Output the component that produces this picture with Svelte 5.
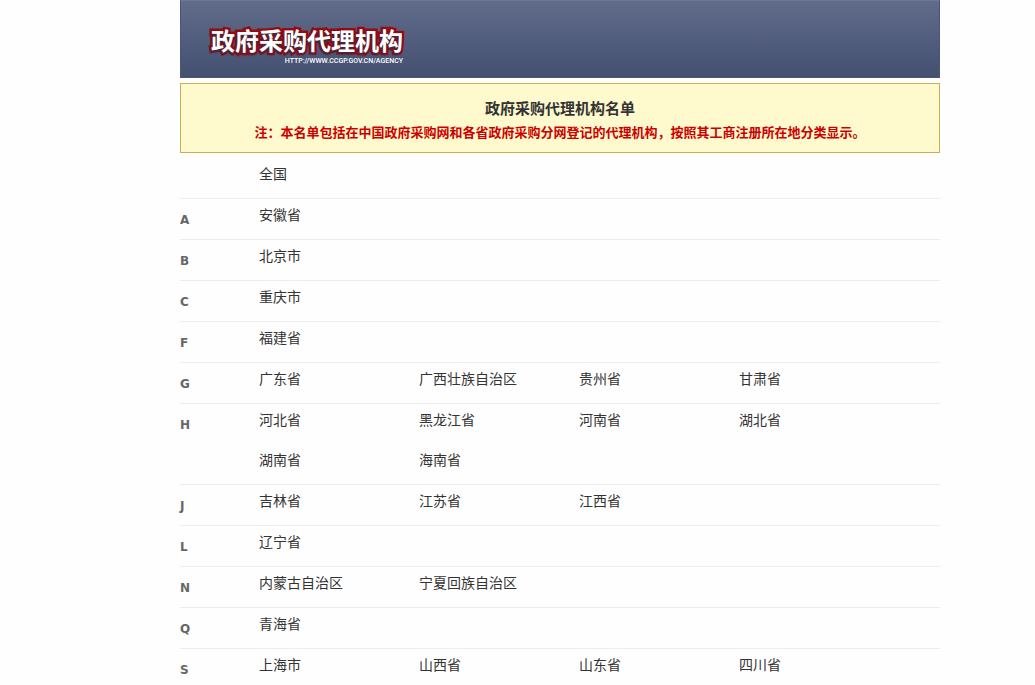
<script>
	const groups = [
		{ letter: '', regions: ['全国'] },
		{ letter: 'A', regions: ['安徽省'] },
		{ letter: 'B', regions: ['北京市'] },
		{ letter: 'C', regions: ['重庆市'] },
		{ letter: 'F', regions: ['福建省'] },
		{ letter: 'G', regions: ['广东省', '广西壮族自治区', '贵州省', '甘肃省'] },
		{ letter: 'H', regions: ['河北省', '黑龙江省', '河南省', '湖北省', '湖南省', '海南省'] },
		{ letter: 'J', regions: ['吉林省', '江苏省', '江西省'] },
		{ letter: 'L', regions: ['辽宁省'] },
		{ letter: 'N', regions: ['内蒙古自治区', '宁夏回族自治区'] },
		{ letter: 'Q', regions: ['青海省'] },
		{ letter: 'S', regions: ['上海市', '山西省', '山东省', '四川省'] }
	];
</script>

<div class="page">
	<header class="banner">
		<div class="logo">
			<div class="logo-name">政府采购代理机构</div>
			<div class="logo-url">HTTP://WWW.CCGP.GOV.CN/AGENCY</div>
		</div>
	</header>

	<section class="notice">
		<h1>政府采购代理机构名单</h1>
		<p>注：本名单包括在中国政府采购网和各省政府采购分网登记的代理机构，按照其工商注册所在地分类显示。</p>
	</section>

	<main>
		{#each groups as group}
			<div class="group">
				<div class="letter">{group.letter}</div>
				<ul>
					{#each group.regions as region}
						<li><a href="#{region}">{region}</a></li>
					{/each}
				</ul>
			</div>
		{/each}
	</main>
</div>

<style>
	:global(body) {
		background: #fefefe;
		overflow-x: hidden;
	}

	.page {
		max-width: 760px;
		margin-left: 180px;
		color: #333;
		font-family: 'Noto Sans CJK SC', sans-serif;
		font-size: 14px;
	}

	.banner {
		box-sizing: border-box;
		height: 78px;
		padding: 24px 30px 0;
		border: 1px solid #4a5676;
		border-top-color: #6c7794;
		background: linear-gradient(#616c8b, #445070);
	}

	.logo {
		width: max-content;
	}

	.logo-name {
		color: #fff;
		font-size: 24px;
		font-weight: 700;
		line-height: 30px;
		-webkit-text-stroke: 5px #960a10;
		paint-order: stroke fill;
		text-shadow: 0 2px 3px #27304a;
	}

	.logo-url {
		color: #fff;
		font-family: Roboto, sans-serif;
		font-size: 7px;
		font-weight: 500;
		line-height: 12px;
		text-align: right;
	}

	.notice {
		margin: 5px 0;
		padding: 12px 0 8px;
		border: 1px solid #c8b050;
		background: #fffacd;
		text-align: center;
	}

	.notice h1 {
		margin: 0;
		font-size: 15px;
		line-height: 24px;
	}

	.notice p {
		margin: 0;
		color: #c00;
		font-size: 13px;
		font-weight: 700;
		line-height: 24px;
	}

	.group {
		display: flex;
		border-bottom: 1px solid #eee;
	}

	.letter {
		flex: 0 0 79px;
		padding-top: 2px;
		color: #666;
		font-family: 'DejaVu Sans', Verdana, sans-serif;
		font-size: 12px;
		font-weight: 700;
		line-height: 38px;
	}

	ul {
		display: grid;
		grid-template-columns: repeat(4, 160px);
		margin: 0;
		padding: 0;
		list-style: none;
	}

	li {
		height: 40px;
		line-height: 30px;
	}

	a {
		color: #333;
		text-decoration: none;
	}

	a:hover {
		color: #c00;
		text-decoration: underline;
	}
</style>
